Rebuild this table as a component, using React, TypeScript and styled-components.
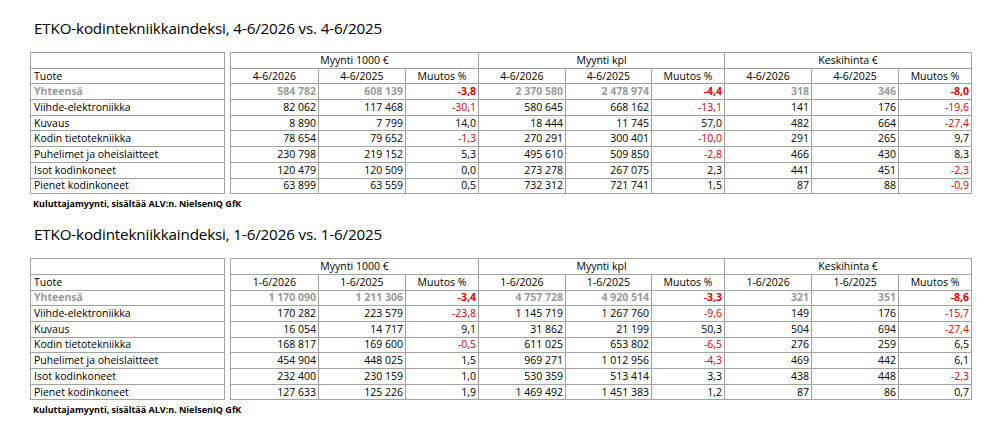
import styled, { createGlobalStyle, css } from 'styled-components';

type Row = { name: string; values: string[]; total?: boolean };

interface Period {
  title: string;
  current: string;
  previous: string;
  rows: Row[];
}

const groups = ['Myynti 1000 €', 'Myynti kpl', 'Keskihinta €'];
const colWidths = [88, 87, 73, 87, 86, 73, 87, 87, 73];
const source = 'Kuluttajamyynti, sisältää ALV:n. NielsenIQ GfK';

const periods: Period[] = [
  {
    title: 'ETKO-kodintekniikkaindeksi, 4-6/2026 vs. 4-6/2025',
    current: '4-6/2026',
    previous: '4-6/2025',
    rows: [
      { name: 'Yhteensä', total: true, values: ['584 782', '608 139', '-3,8', '2 370 580', '2 478 974', '-4,4', '318', '346', '-8,0'] },
      { name: 'Viihde-elektroniikka', values: ['82 062', '117 468', '-30,1', '580 645', '668 162', '-13,1', '141', '176', '-19,6'] },
      { name: 'Kuvaus', values: ['8 890', '7 799', '14,0', '18 444', '11 745', '57,0', '482', '664', '-27,4'] },
      { name: 'Kodin tietotekniikka', values: ['78 654', '79 652', '-1,3', '270 291', '300 401', '-10,0', '291', '265', '9,7'] },
      { name: 'Puhelimet ja oheislaitteet', values: ['230 798', '219 152', '5,3', '495 610', '509 850', '-2,8', '466', '430', '8,3'] },
      { name: 'Isot kodinkoneet', values: ['120 479', '120 509', '0,0', '273 278', '267 075', '2,3', '441', '451', '-2,3'] },
      { name: 'Pienet kodinkoneet', values: ['63 899', '63 559', '0,5', '732 312', '721 741', '1,5', '87', '88', '-0,9'] },
    ],
  },
  {
    title: 'ETKO-kodintekniikkaindeksi, 1-6/2026 vs. 1-6/2025',
    current: '1-6/2026',
    previous: '1-6/2025',
    rows: [
      { name: 'Yhteensä', total: true, values: ['1 170 090', '1 211 306', '-3,4', '4 757 728', '4 920 514', '-3,3', '321', '351', '-8,6'] },
      { name: 'Viihde-elektroniikka', values: ['170 282', '223 579', '-23,8', '1 145 719', '1 267 760', '-9,6', '149', '176', '-15,7'] },
      { name: 'Kuvaus', values: ['16 054', '14 717', '9,1', '31 862', '21 199', '50,3', '504', '694', '-27,4'] },
      { name: 'Kodin tietotekniikka', values: ['168 817', '169 600', '-0,5', '611 025', '653 802', '-6,5', '276', '259', '6,5'] },
      { name: 'Puhelimet ja oheislaitteet', values: ['454 904', '448 025', '1,5', '969 271', '1 012 956', '-4,3', '469', '442', '6,1'] },
      { name: 'Isot kodinkoneet', values: ['232 400', '230 159', '1,0', '530 359', '513 414', '3,3', '438', '448', '-2,3'] },
      { name: 'Pienet kodinkoneet', values: ['127 633', '125 226', '1,9', '1 469 492', '1 451 383', '1,2', '87', '86', '0,7'] },
    ],
  },
];

const App = () => {
  return (
    <>
      <GlobalStyle />
      <Page>
        {periods.map((period) => (
          <IndexTable key={period.title} period={period} />
        ))}
      </Page>
    </>
  );
};

const IndexTable = ({ period }: { period: Period }) => {
  return (
    <Section>
      <Title>{period.title}</Title>
      <Tables>
        <Table $width={195}>
          <tbody>
            <tr>
              <Cell />
            </tr>
            <tr>
              <Cell>Tuote</Cell>
            </tr>
            {period.rows.map((row) => (
              <tr key={row.name}>
                <Cell $total={row.total}>{row.name}</Cell>
              </tr>
            ))}
          </tbody>
        </Table>
        <Table $width={741}>
          <colgroup>
            {colWidths.map((w, i) => (
              <col key={i} style={{ width: w }} />
            ))}
          </colgroup>
          <tbody>
            <tr>
              {groups.map((g) => (
                <HeadCell key={g} colSpan={3}>
                  {g}
                </HeadCell>
              ))}
            </tr>
            <tr>
              {groups.map((g) => [
                <HeadCell key={g + 'a'}>{period.current}</HeadCell>,
                <HeadCell key={g + 'b'}>{period.previous}</HeadCell>,
                <HeadCell key={g + 'c'}>Muutos %</HeadCell>,
              ])}
            </tr>
            {period.rows.map((row) => (
              <tr key={row.name}>
                {row.values.map((v, i) => (
                  <NumCell
                    key={i}
                    $total={row.total}
                    $negative={i % 3 === 2 && v.startsWith('-')}
                  >
                    {v}
                  </NumCell>
                ))}
              </tr>
            ))}
          </tbody>
        </Table>
      </Tables>
      <Source>{source}</Source>
    </Section>
  );
};

const GlobalStyle = createGlobalStyle`
  html, body {
    margin: 0;
    background: #ffffff;
  }
  body {
    font-family: 'Open Sans', 'Noto Sans', sans-serif;
    color: #000000;
  }
`;

const Page = styled.main`
  width: 1000px;
  height: 432px;
  padding: 16px 0 0 30px;
  box-sizing: border-box;
  display: flex;
  flex-direction: column;
  gap: 11px;
`;

const Section = styled.section`
  display: flex;
  flex-direction: column;
`;

const Title = styled.h2`
  margin: 0 0 12px 4px;
  height: 24px;
  line-height: 24px;
  font-size: 15.2px;
  font-weight: 400;
  letter-spacing: -0.15px;
`;

const Tables = styled.div`
  display: flex;
  gap: 5px;
  align-items: flex-start;
`;

const Table = styled.table<{ $width: number }>`
  width: ${({ $width }) => $width}px;
  table-layout: fixed;
  border-collapse: collapse;
  font-size: 10.5px;

  tr {
    height: 15.7px;
  }
`;

const cellBase = css`
  border: 1px solid #a3a3a3;
  padding: 0 3px;
  line-height: 13px;
  white-space: nowrap;
  overflow: hidden;
`;

const Cell = styled.td<{ $total?: boolean }>`
  ${cellBase};
  text-align: left;
  ${({ $total }) =>
    $total &&
    css`
      color: #9a9a9a;
      font-weight: 700;
    `}
`;

const HeadCell = styled.td`
  ${cellBase};
  text-align: center;
`;

const NumCell = styled.td<{ $total?: boolean; $negative?: boolean }>`
  ${cellBase};
  text-align: right;
  padding: 0 2px;
  ${({ $total }) =>
    $total &&
    css`
      color: #9a9a9a;
      font-weight: 700;
    `}
  ${({ $negative }) =>
    $negative &&
    css`
      color: #e00000;
    `}
`;

const Source = styled.p`
  margin: 3px 0 0 3px;
  height: 14px;
  line-height: 14px;
  font-size: 9px;
  font-weight: 700;
`;

export default App;
